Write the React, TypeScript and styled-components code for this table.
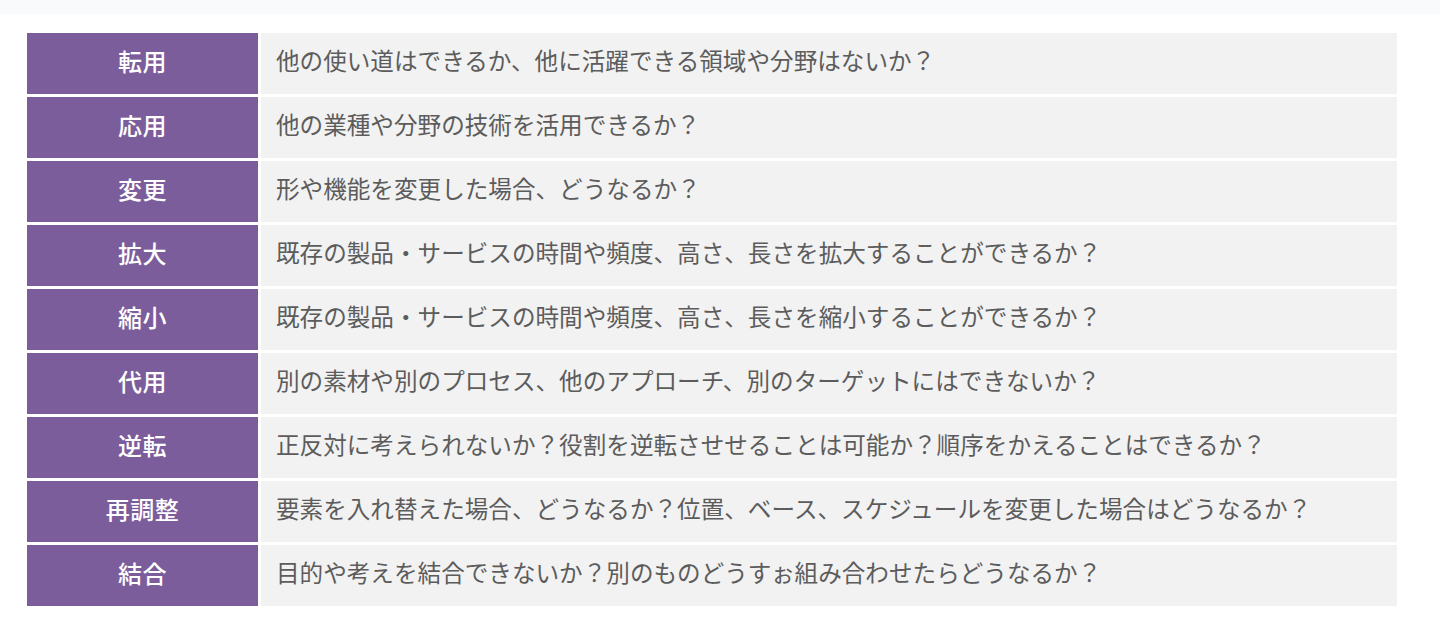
import React from 'react';
import styled, { createGlobalStyle } from 'styled-components';

const GlobalStyle = createGlobalStyle`
  html, body {
    margin: 0;
    padding: 0;
    background: #ffffff;
  }
  body {
    font-family: "Noto Sans CJK JP", "Noto Sans", sans-serif;
  }
`;

interface Item {
  label: string;
  question: string;
}

const items: Item[] = [
  { label: '転用', question: '他の使い道はできるか、他に活躍できる領域や分野はないか？' },
  { label: '応用', question: '他の業種や分野の技術を活用できるか？' },
  { label: '変更', question: '形や機能を変更した場合、どうなるか？' },
  { label: '拡大', question: '既存の製品・サービスの時間や頻度、高さ、長さを拡大することができるか？' },
  { label: '縮小', question: '既存の製品・サービスの時間や頻度、高さ、長さを縮小することができるか？' },
  { label: '代用', question: '別の素材や別のプロセス、他のアプローチ、別のターゲットにはできないか？' },
  { label: '逆転', question: '正反対に考えられないか？役割を逆転させせることは可能か？順序をかえることはできるか？' },
  { label: '再調整', question: '要素を入れ替えた場合、どうなるか？位置、ベース、スケジュールを変更した場合はどうなるか？' },
  { label: '結合', question: '目的や考えを結合できないか？別のものどうすぉ組み合わせたらどうなるか？' },
];

const App: React.FC = () => {
  return (
    <>
      <GlobalStyle />
      <Page>
        <TopBar />
        <Table>
          {items.map(item => (
            <React.Fragment key={item.label}>
              <Label>{item.label}</Label>
              <Question>{item.question}</Question>
            </React.Fragment>
          ))}
        </Table>
      </Page>
    </>
  );
};

export default App;

const Page = styled.div`
  width: 1440px;
  height: 638px;
  background: #ffffff;
  overflow: hidden;
`;

const TopBar = styled.div`
  height: 14px;
  background: #f9fafc;
`;

const Table = styled.div`
  display: grid;
  grid-template-columns: 231px 1136px;
  grid-auto-rows: 61px;
  column-gap: 3px;
  row-gap: 3px;
  margin: 19px 0 0 27px;
`;

const Label = styled.div`
  display: flex;
  align-items: center;
  justify-content: center;
  padding-bottom: 5px;
  background: #7c5d9c;
  color: #ffffff;
  font-size: 24px;
  font-weight: 500;
  line-height: 1;
  letter-spacing: 0.5px;
`;

const Question = styled.div`
  display: flex;
  align-items: center;
  padding: 0 0 5px 15px;
  background: #f2f2f2;
  color: #5c5c5c;
  font-size: 23.6px;
  line-height: 1;
  white-space: nowrap;
`;
